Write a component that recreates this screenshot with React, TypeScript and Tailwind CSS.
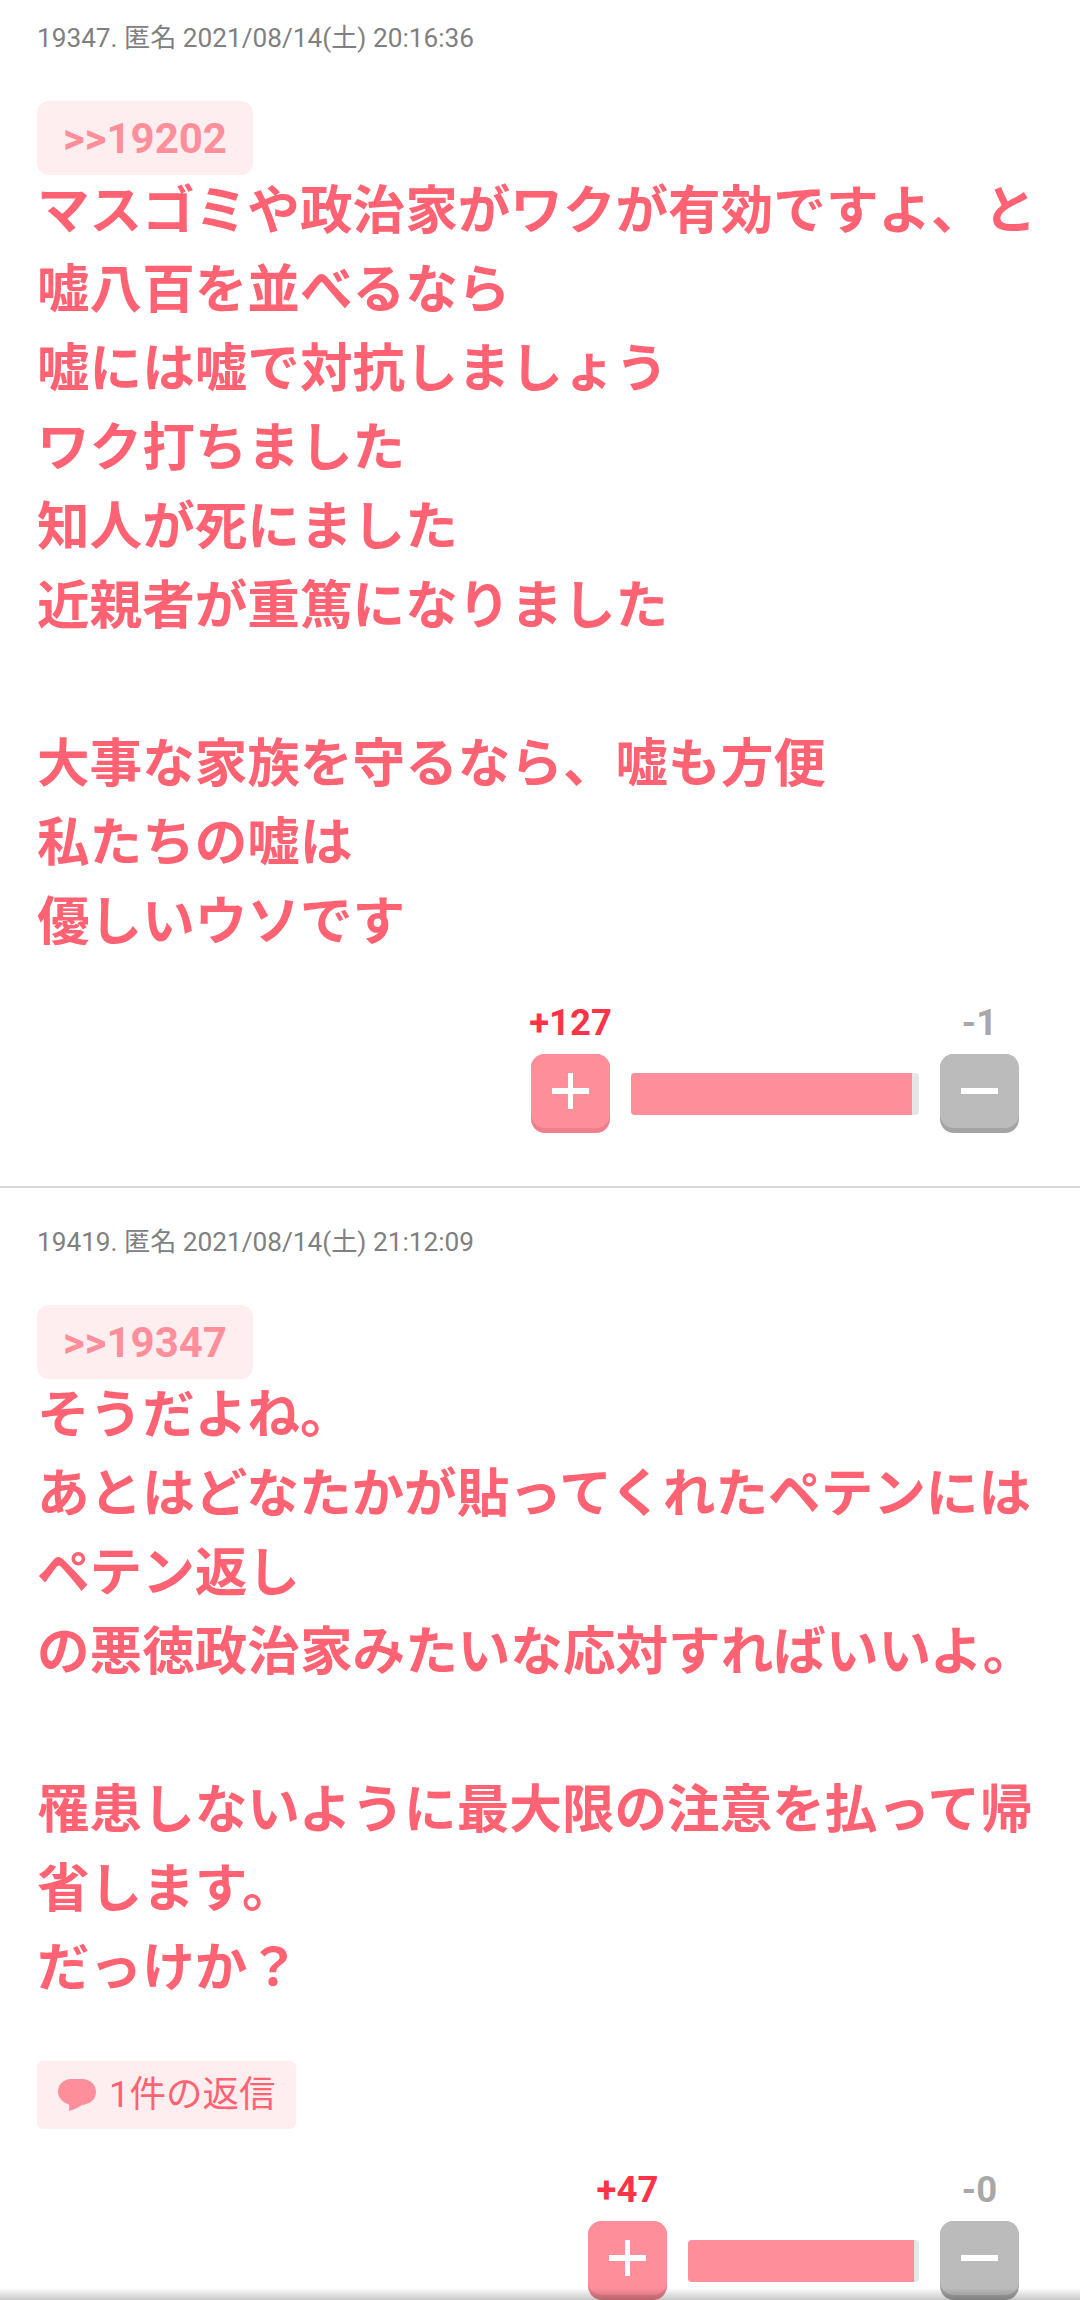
const FONT = "font-['Roboto','Noto_Sans_CJK_JP',sans-serif]";

function Plus() {
  return (
    <svg width="37" height="36" viewBox="0 0 37 36" aria-hidden="true">
      <rect x="16" y="0" width="5" height="36" fill="#fff" />
      <rect x="0" y="15" width="37" height="6" fill="#fff" />
    </svg>
  );
}

function Minus() {
  return (
    <svg width="37" height="6" viewBox="0 0 37 6" aria-hidden="true">
      <rect x="0" y="0" width="37" height="6" fill="#fff" />
    </svg>
  );
}

function Bubble() {
  return (
    <svg width="38" height="32" viewBox="0 0 38 32" aria-hidden="true">
      <path d="M13 0H24C32 0 38 5.500 38 13C38 20.500 32 25 24 26C20 29 15 31 10.500 32C11.500 30 11.500 28 11 25.500C4.500 23.500 0 18.500 0 13C0 5.500 5.500 0 13 0Z" fill="#ff8e9b" />
    </svg>
  );
}

function VoteButton({ face, edge, children }: { face: string; edge: string; children: React.ReactNode }) {
  return (
    <div className={`mt-[13px] w-[79px] h-[79px] rounded-[14px] ${edge}`}>
      <div className={`w-[79px] h-[74px] rounded-[14px] ${face} flex items-center justify-center`}>{children}</div>
    </div>
  );
}

function Votes({ plus, minus, barWidth, fill }: { plus: string; minus: string; barWidth: number; fill: number }) {
  return (
    <div className="flex justify-end items-end pr-[61px]">
      <div className="flex flex-col items-center w-[79px]">
        <div className="text-[36.5px] leading-[36px] font-bold text-[#ff3347]">{plus}</div>
        <VoteButton face="bg-[#ff8e9b]" edge="bg-[#ee808b]">
          <Plus />
        </VoteButton>
      </div>
      <div className="mx-[21px] mb-[18px] h-[42px] rounded-[4px] bg-[#e6e6e6] overflow-hidden" style={{ width: barWidth }}>
        <div className="h-full bg-[#ff8e9b]" style={{ width: fill }} />
      </div>
      <div className="flex flex-col items-center w-[79px]">
        <div className="text-[36.5px] leading-[36px] font-bold text-[#a8a8a8]">{minus}</div>
        <VoteButton face="bg-[#bbbbbb]" edge="bg-[#a4a4a4]">
          <Minus />
        </VoteButton>
      </div>
    </div>
  );
}

function Meta({ children }: { children: string }) {
  return <div className="text-[26.2px] leading-[32px] text-[#808080]">{children}</div>;
}

function Quote({ children }: { children: string }) {
  return (
    <div className="mt-[47px] w-[216px] h-[74px] rounded-[12px] bg-[#ffeef0] flex items-center justify-center text-[42px] font-bold text-[#ff8e9b]">
      {children}
    </div>
  );
}

function Body({ children }: { children: string }) {
  return (
    <div className="-mt-[3px] text-[52.6px] leading-[79px] font-bold text-[#ff6272] whitespace-pre-line">{children}</div>
  );
}

export default function App() {
  return (
    <div className={`relative w-[1080px] h-[2300px] overflow-hidden bg-white ${FONT}`}>
      <section className="pl-[37px] pt-[22px] h-[1188px] border-b-2 border-[#d8d8d8]">
        <Meta>19347. 匿名 2021/08/14(土) 20:16:36</Meta>
        <Quote>{">>19202"}</Quote>
        <Body>{"マスゴミや政治家がワクが有効ですよ、と\n嘘八百を並べるなら\n嘘には嘘で対抗しましょう\nワク打ちました\n知人が死にました\n近親者が重篤になりました\n\n大事な家族を守るなら、嘘も方便\n私たちの嘘は\n優しいウソです"}</Body>
        <div className="mt-[43px]">
          <Votes plus="+127" minus="-1" barWidth={288} fill={281} />
        </div>
      </section>
      <section className="pl-[37px] pt-[38px]">
        <Meta>19419. 匿名 2021/08/14(土) 21:12:09</Meta>
        <Quote>{">>19347"}</Quote>
        <Body>{"そうだよね。\nあとはどなたかが貼ってくれたペテンには\nペテン返し\nの悪徳政治家みたいな応対すればいいよ。\n\n罹患しないように最大限の注意を払って帰\n省します。\nだっけか？"}</Body>
        <div className="mt-[53px] w-[259px] h-[68px] rounded-[6px] bg-[#ffeef0] flex items-center pl-[21px] gap-[13px]">
          <Bubble />
          <span className="text-[36.5px] text-[#ff6272]">1件の返信</span>
        </div>
        <div className="mt-[43px]">
          <Votes plus="+47" minus="-0" barWidth={231} fill={226} />
        </div>
      </section>
      <div className="absolute left-0 right-0 bottom-0 h-[12px] bg-gradient-to-b from-transparent to-[#00000038]" />
    </div>
  );
}
